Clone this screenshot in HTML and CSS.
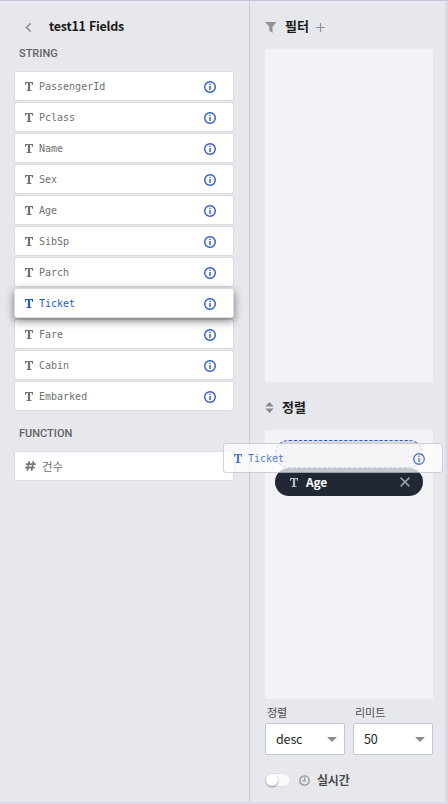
FILE: index.html
```html
<!DOCTYPE html>
<html lang="ko">
<head>
<meta charset="utf-8">
<title>test11 Fields</title>
<link rel="stylesheet" href="styles.css">
</head>
<body>
<svg width="0" height="0" class="defs">
  <symbol id="text" viewBox="0 0 8 9"><path d="M0 0H8V2.8H7.1L6.6 1H5.1V8H6.4V9H1.6V8H2.9V1H1.4L.9 2.8H0Z"/></symbol>
  <symbol id="info" viewBox="0 0 12 12"><circle cx="6" cy="6" r="5.3" fill="none" stroke="currentColor" stroke-width="1.4"/><path d="M5.3 2.8h1.4v1.3H5.3zM5.3 5h1.4v4.1H5.3z"/></symbol>
</svg>
<div class="app">
  <section class="fields">
    <header class="head">
      <svg class="back" viewBox="0 0 7 9"><path d="M5.7.5 1.5 4.5l4.2 4"/></svg>
      <h1>test11 Fields</h1>
    </header>
    <h2>STRING</h2>
    <ul class="list">
      <li class="field"><svg class="t"><use href="#text"/></svg><span>PassengerId</span><svg class="i"><use href="#info"/></svg></li>
      <li class="field"><svg class="t"><use href="#text"/></svg><span>Pclass</span><svg class="i"><use href="#info"/></svg></li>
      <li class="field"><svg class="t"><use href="#text"/></svg><span>Name</span><svg class="i"><use href="#info"/></svg></li>
      <li class="field"><svg class="t"><use href="#text"/></svg><span>Sex</span><svg class="i"><use href="#info"/></svg></li>
      <li class="field"><svg class="t"><use href="#text"/></svg><span>Age</span><svg class="i"><use href="#info"/></svg></li>
      <li class="field"><svg class="t"><use href="#text"/></svg><span>SibSp</span><svg class="i"><use href="#info"/></svg></li>
      <li class="field"><svg class="t"><use href="#text"/></svg><span>Parch</span><svg class="i"><use href="#info"/></svg></li>
      <li class="field active"><svg class="t"><use href="#text"/></svg><span>Ticket</span><svg class="i"><use href="#info"/></svg></li>
      <li class="field"><svg class="t"><use href="#text"/></svg><span>Fare</span><svg class="i"><use href="#info"/></svg></li>
      <li class="field"><svg class="t"><use href="#text"/></svg><span>Cabin</span><svg class="i"><use href="#info"/></svg></li>
      <li class="field"><svg class="t"><use href="#text"/></svg><span>Embarked</span><svg class="i"><use href="#info"/></svg></li>
    </ul>
    <h2 class="function">FUNCTION</h2>
    <ul class="list">
      <li class="field count"><svg class="hash" viewBox="0 0 11 10"><path d="M4.3.3 2.3 9.7M8.5.3l-2 9.4M1 3.2h9.7M.2 6.7h9.7"/></svg><span>건수</span></li>
    </ul>
  </section>
  <section class="shelf">
    <header class="title filter">
      <svg class="funnel" viewBox="0 0 12 11"><path d="M0 0h11.5L7.5 4.7V11L4.4 8.8V4.7Z"/></svg>
      <h3>필터</h3>
      <svg class="plus" viewBox="0 0 9 9"><path d="M4.5 0v9M0 4.5h9"/></svg>
    </header>
    <div class="drop filters"></div>
    <header class="title sort">
      <svg class="updown" viewBox="0 0 9 11"><path d="M4.5 0 8.7 4.5H.3ZM.3 6.5h8.4L4.5 11Z"/></svg>
      <h3>정렬</h3>
    </header>
    <div class="drop sorts">
      <div class="slot"></div>
      <div class="pill"><svg class="t"><use href="#text"/></svg><span>Age</span><svg class="x" viewBox="0 0 10 10"><path d="m.6.6 8.8 8.8m0-8.8L.6 9.4"/></svg></div>
    </div>
    <div class="selects">
      <div><label>정렬</label><div class="select"><span>desc</span><i></i></div></div>
      <div><label>리미트</label><div class="select"><span>50</span><i></i></div></div>
    </div>
    <div class="live">
      <span class="switch"></span>
      <svg class="clock" viewBox="0 0 11 11"><circle cx="5.5" cy="5.5" r="4.7"/><path d="M5.8 2.5v3.4H3.4"/></svg>
      <b>실시간</b>
    </div>
  </section>
  <div class="field ghost"><svg class="t"><use href="#text"/></svg><span>Ticket</span><svg class="i"><use href="#info"/></svg></div>
</div>
</body>
</html>
```

FILE: styles.css
```css
* { box-sizing: border-box; }
body { margin: 0; overflow: hidden; font-family: "Noto Sans", "Noto Sans CJK KR", sans-serif; color: #222; }
h1, h2, h3, ul { margin: 0; padding: 0; }
ul { list-style: none; }
svg { display: block; flex: none; }
.defs { position: absolute; }
.app { position: relative; display: flex; width: 448px; height: 804px; overflow: hidden; background: #e7e8ed; border-top: 1px solid #bfc7d9; border-bottom: 2px solid #d2dff0; }
.app::before { content: ""; position: absolute; left: 14px; top: -1px; width: 70px; height: 1px; background: #e7e8ed; }
.app::after { content: ""; position: absolute; right: 0; top: 0; width: 4px; height: 100%; background: linear-gradient(to right, #e7e8ed, #d3d4d9); }
.fields { width: 250px; padding: 15px 15px 0 14px; border-right: 1px solid #c9cace; }
.head { display: flex; align-items: center; height: 20px; padding-left: 11px; }
.back { width: 7px; height: 9px; margin-top: 3px; fill: none; stroke: #929292; stroke-width: 1.7; }
h1 { margin-left: 17px; font: 700 12.5px/20px "Noto Sans CJK KR", sans-serif; letter-spacing: -.25px; color: #1c1c1c; }
h2 { height: 20px; margin: 8px 0 7px 5px; font: 500 11px/20px Roboto, sans-serif; color: #636363; }
h2.function { margin: 13px 0 7px 5px; }
.list { display: flex; flex-direction: column; gap: 1px; width: 220px; }
.field { display: flex; align-items: center; width: 220px; height: 30px; padding: 0 17px 0 10px; border: 1px solid #dbdce0; border-radius: 3px; background: #fff; color: #707070; font: 10px/20px "DejaVu Sans Mono", "Noto Sans CJK KR", monospace; }
.field span { margin-left: 6px; padding-top: 2px; }
.t { width: 8px; height: 9px; fill: currentColor; }
.i { width: 12px; height: 12px; margin-left: auto; margin-top: 2px; color: #2c5bc9; fill: currentColor; }
.active { position: relative; color: #1f58c7; box-shadow: 0 3px 9px rgba(0, 0, 0, .5); }
.hash { width: 11px; height: 10px; fill: none; stroke: #777; stroke-width: 1.7; }
.count span { padding-top: 0; font: 11.5px/20px "Noto Sans CJK KR", sans-serif; }
.shelf { width: 184px; padding: 15px 0 0 15px; }
.title { display: flex; align-items: center; height: 20px; }
.funnel { width: 12px; height: 11px; margin-top: 2px; fill: #929292; }
h3 { margin-left: 8px; font: 700 13px/20px "Noto Sans CJK KR", sans-serif; color: #1c1c1c; }
.plus { width: 9px; height: 9px; margin: 3px 0 0 7px; stroke: #929292; stroke-width: 1.2; }
.drop { width: 168px; background: #f2f3f7; }
.filters { height: 333px; margin-top: 13px; }
.sort { margin-top: 15px; }
.updown { width: 9px; height: 11px; margin-top: 1px; fill: #888; }
.sorts { height: 269px; margin-top: 13px; padding: 10px; }
.slot { width: 148px; height: 28px; border: 1px dashed #2c5bc9; border-radius: 14px; background: #dadbe0; }
.pill { display: flex; align-items: center; width: 148px; height: 28px; padding: 0 13px 0 15px; border-radius: 14px; background: #222736; color: #fff; font: 700 12px/20px "Noto Sans CJK KR", sans-serif; letter-spacing: -.25px; }
.pill .t { color: #b9bac0; }
.pill span { margin-left: 8px; }
.x { width: 10px; height: 10px; margin-left: auto; stroke: #9b9ea6; stroke-width: 1.5; }
.selects { display: flex; gap: 8px; width: 168px; margin-top: 3px; }
.selects > div { width: 80px; }
label { display: block; height: 21px; padding-left: 2px; font: 11px/21px "Noto Sans CJK KR", sans-serif; color: #4c4c4c; }
.select { display: flex; align-items: center; justify-content: space-between; height: 32px; padding: 0 7px 0 10px; border: 1px solid #bfc7db; border-radius: 2px; background: #fff; font: 12.5px/20px "Noto Sans CJK KR", sans-serif; letter-spacing: -.15px; }
.select i { border: 5px solid transparent; border-top-color: #8e8e8e; border-bottom: 0; }
.live { display: flex; align-items: center; height: 20px; margin-top: 15px; }
.switch { width: 26px; height: 14px; border: 1px solid #dedfe3; border-radius: 7px; background: #f9f9fb; }
.switch::before { content: ""; display: block; width: 12px; height: 12px; border-radius: 50%; background: #fff; box-shadow: 0 1px 2px rgba(0, 0, 0, .4); }
.clock { width: 11px; height: 11px; margin-left: 8px; fill: none; stroke: #929292; stroke-width: 1.3; }
.live b { margin-left: 7px; font: 700 12px/20px "Noto Sans CJK KR", sans-serif; letter-spacing: -.2px; color: #4c4c4c; }
.ghost { position: absolute; left: 223px; top: 442px; z-index: 2; color: #1f58c7; border-color: #c4c5c9; opacity: .74; }
```
